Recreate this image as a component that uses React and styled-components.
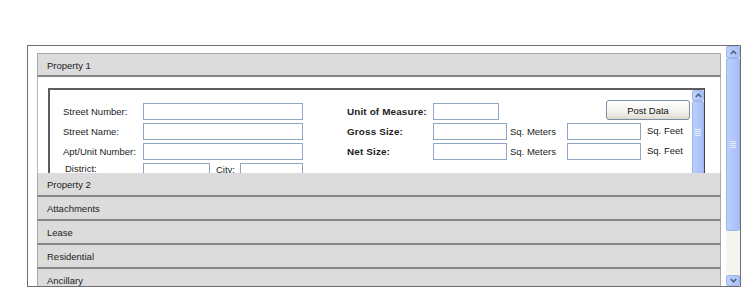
import React from 'react';
import styled, { createGlobalStyle } from 'styled-components';

const Global = createGlobalStyle`
  html, body { margin: 0; padding: 0; background: #fff; }
  body {
    font-family: "Liberation Sans", Arial, sans-serif;
    font-size: 9.5px;
    color: #1a1a1a;
  }
  * { box-sizing: border-box; }
`;

const Page = styled.div`
  padding: 45px 0 0 27px;
`;

const Frame = styled.div`
  width: 714px;
  height: 242px;
  border: 1px solid #6e6e6e;
  display: flex;
  overflow: hidden;
`;

const Accordion = styled.div`
  flex: 1;
  min-width: 0;
  padding: 7px 5px 0 9px;
  display: flex;
  flex-direction: column;
  overflow: hidden;
`;

const Header = styled.div`
  flex-shrink: 0;
  height: 24px;
  display: flex;
  align-items: center;
  padding-left: 9px;
  padding-top: 1px;
  background: #dcdcdc;
  border: 1px solid #a9a9a9;
  border-top: ${(p) => (p.$first ? '1px solid #a9a9a9' : 'none')};
  border-bottom: 2px solid #858585;
  color: #222;
`;

const Panel = styled.div`
  flex-shrink: 0;
  height: 96px;
  overflow: hidden;
  padding: 11px 15px 0 10px;
  border-left: 1px solid #b5b5b5;
  border-right: 1px solid #b5b5b5;
`;

const InnerBox = styled.div`
  height: 200px;
  display: flex;
  border-top: 2px solid #5c5c5c;
  border-left: 2px solid #5c5c5c;
  border-right: 1px solid #444;
`;

const Form = styled.div`
  flex: 1;
  min-width: 0;
  display: flex;
  align-items: flex-start;
  gap: 44px;
  padding: 13px 2px 0 13px;
`;

const LeftGrid = styled.div`
  display: grid;
  grid-template-columns: 80px 160px;
  grid-auto-rows: 17px;
  row-gap: 3px;
`;

const MidGrid = styled.div`
  display: grid;
  grid-template-columns: 86px 74px 60px 74px 49px;
  grid-auto-rows: 17px;
  row-gap: 3px;
`;

const Label = styled.span`
  display: flex;
  align-items: center;
  white-space: nowrap;
  color: #222;
  font-weight: ${(p) => (p.$bold ? 700 : 400)};
  font-size: ${(p) => (p.$bold ? '9.9px' : '9.5px')};
  letter-spacing: ${(p) => (p.$bold ? '0.15px' : '0')};
  padding-left: ${(p) => p.$pl || 0}px;
  padding-bottom: ${(p) => p.$pb || 0}px;
  margin-top: ${(p) => p.$mt || 0}px;
  grid-column: ${(p) => p.$col || 'auto'};
`;

const Input = styled.div`
  width: ${(p) => p.$w}px;
  height: 17px;
  background: #fff;
  border: 1px solid #8fa6c4;
  grid-column: ${(p) => p.$col || 'auto'};
`;

const InlineRow = styled.div`
  display: flex;
  align-items: center;
`;

const CityLabel = styled.span`
  margin: 0 5px 0 6px;
  padding-bottom: 5px;
  color: #222;
`;

const Button = styled.div`
  grid-column: 4 / span 2;
  grid-row: 1;
  justify-self: end;
  width: 84px;
  height: 20px;
  margin-top: -3px;
  display: flex;
  align-items: center;
  justify-content: center;
  border: 1px solid #7f8ea5;
  border-radius: 3px;
  background: linear-gradient(#ffffff 0%, #f3f2ee 60%, #dedad1 100%);
  color: #111;
`;

const SBar = styled.div`
  flex-shrink: 0;
  width: ${(p) => p.$w}px;
  display: flex;
  flex-direction: column;
  background: #f6f6f1;
  overflow: hidden;
`;

const SBtn = styled.div`
  flex-shrink: 0;
  height: ${(p) => p.$h}px;
  display: flex;
  align-items: center;
  justify-content: center;
  background: linear-gradient(90deg, #bfd1fb, #abc1f6);
  border: 1px solid #9fb7ef;
  border-radius: 2px;
`;

const Thumb = styled.div`
  flex-shrink: 0;
  height: ${(p) => p.$h}px;
  display: flex;
  align-items: center;
  justify-content: center;
  background: linear-gradient(90deg, #bccffb, #a8bff5);
  border: 1px solid #9db5ee;
  border-radius: 2px;
`;

const Grip = styled.div`
  width: 6px;
  height: 7px;
  margin-top: ${(p) => p.$offset || 0}px;
  background: repeating-linear-gradient(
    #e6eefe 0px, #e6eefe 1px, transparent 1px, transparent 2px
  );
`;

const Track = styled.div`
  flex: 1;
`;

const Chevron = ({ down }) => (
  <svg width="7" height="5" viewBox="0 0 7 5">
    <polyline
      points={down ? '0.8,1 3.5,3.8 6.2,1' : '0.8,4 3.5,1.2 6.2,4'}
      fill="none"
      stroke="#4d6185"
      strokeWidth="1.5"
    />
  </svg>
);

const sections = ['Property 2', 'Attachments', 'Lease', 'Residential', 'Ancillary'];

export default function App() {
  return (
    <>
      <Global />
      <Page>
        <Frame>
          <Accordion>
            <Header $first>Property 1</Header>
            <Panel>
              <InnerBox>
                <Form>
                  <LeftGrid>
                    <Label>Street Number:</Label>
                    <Input $w={160} />
                    <Label>Street Name:</Label>
                    <Input $w={160} />
                    <Label>Apt/Unit Number:</Label>
                    <Input $w={160} />
                    <Label $pl={2} $pb={6}>District:</Label>
                    <InlineRow>
                      <Input $w={68} />
                      <CityLabel>City:</CityLabel>
                      <Input $w={64} />
                    </InlineRow>
                  </LeftGrid>
                  <MidGrid>
                    <Label $bold $col="1">Unit of Measure:</Label>
                    <Input $w={66} $col="2" />
                    <Button>Post Data</Button>
                    <Label $bold $col="1">Gross Size:</Label>
                    <Input $w={74} $col="2" />
                    <Label $pl={3} $col="3">Sq. Meters</Label>
                    <Input $w={74} $col="4" />
                    <Label $pl={6} $mt={-3} $col="5">Sq. Feet</Label>
                    <Label $bold $col="1">Net Size:</Label>
                    <Input $w={74} $col="2" />
                    <Label $pl={3} $col="3">Sq. Meters</Label>
                    <Input $w={74} $col="4" />
                    <Label $pl={6} $mt={-2} $col="5">Sq. Feet</Label>
                  </MidGrid>
                </Form>
                <SBar $w={12}>
                  <SBtn $h={11}>
                    <Chevron />
                  </SBtn>
                  <Thumb $h={110}>
                    <Grip $offset={-48} />
                  </Thumb>
                  <Track />
                </SBar>
              </InnerBox>
            </Panel>
            {sections.map((s) => (
              <Header key={s}>{s}</Header>
            ))}
          </Accordion>
          <SBar $w={14}>
            <SBtn $h={12}>
              <Chevron />
            </SBtn>
            <Thumb $h={173}>
              <Grip />
            </Thumb>
            <Track />
            <SBtn $h={11}>
              <Chevron down />
            </SBtn>
          </SBar>
        </Frame>
      </Page>
    </>
  );
}
